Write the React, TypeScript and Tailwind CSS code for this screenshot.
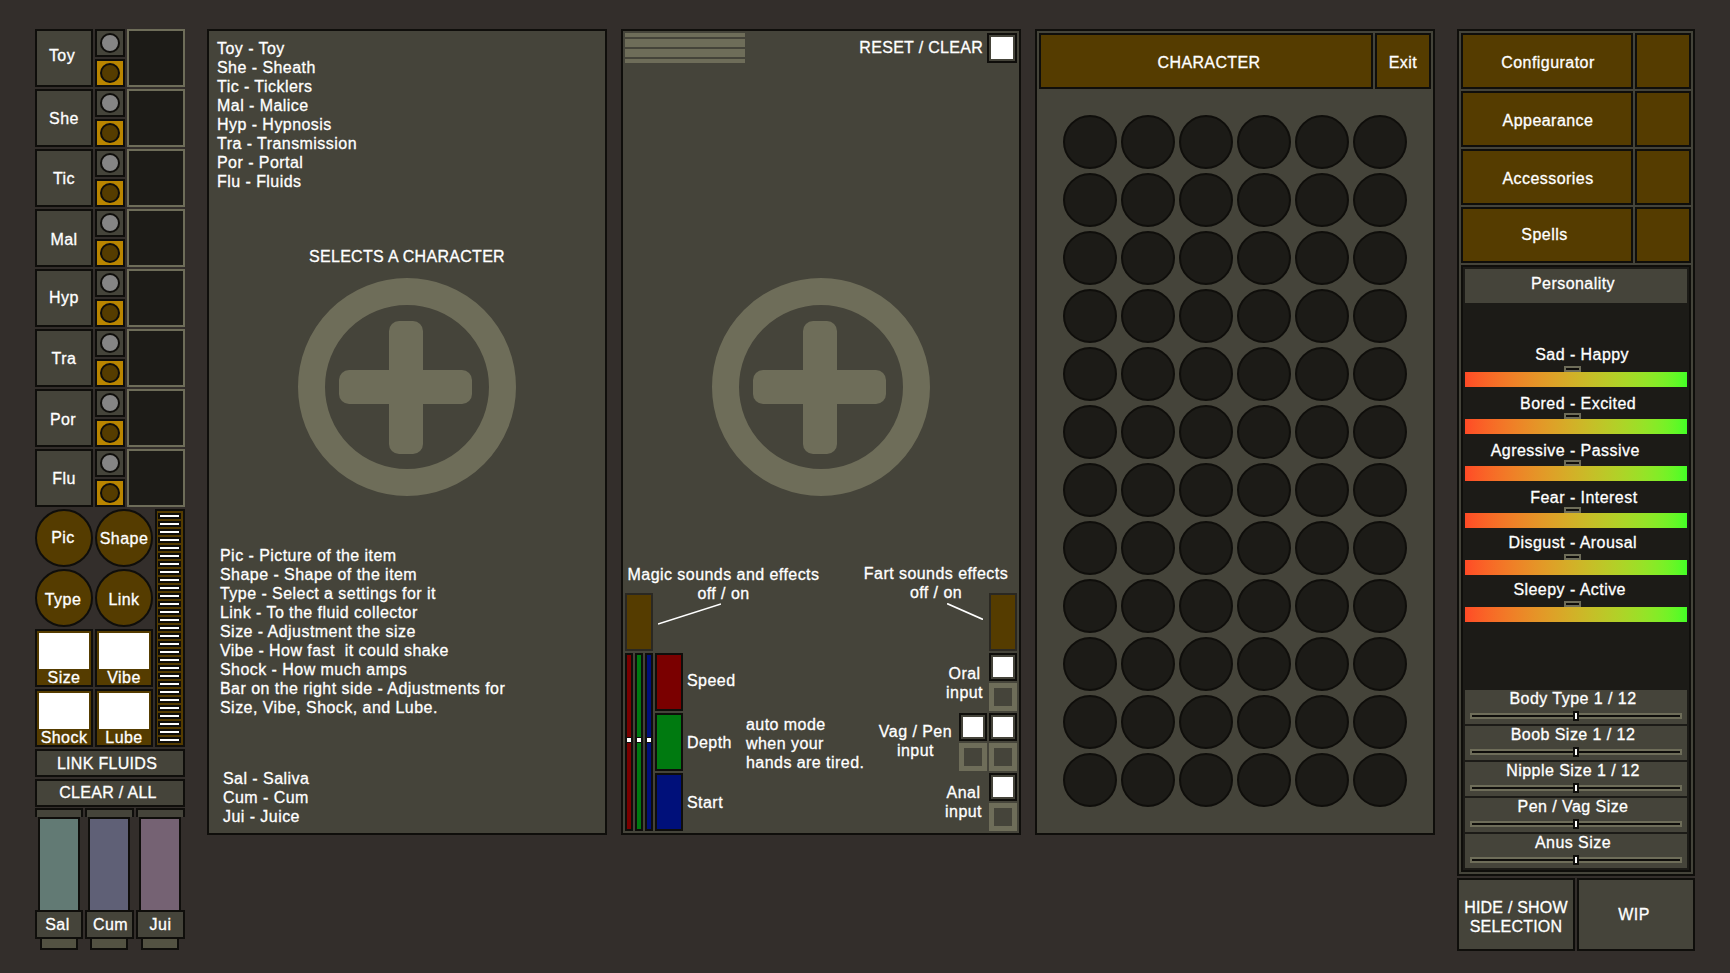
import React from "react";

function Plus() {
  return (
    <svg width="218" height="218" viewBox="0 0 218 218" className="block">
      <circle cx="109" cy="109" r="95.5" fill="none" stroke="#6e6d59" strokeWidth="27" />
      <rect x="41" y="92" width="133" height="34" rx="10" fill="#6e6d59" />
      <rect x="91" y="43" width="34" height="133" rx="10" fill="#6e6d59" />
    </svg>
  );
}

function Check({ size = "w-[28px] h-[28px]" }: { size?: string }) {
  return (
    <div className={`${size} border-2 border-[#0f0e0b] p-[2px] shrink-0`}>
      <div className="w-full h-full bg-white" />
    </div>
  );
}

function Off() {
  return <div className="w-[28px] h-[28px] border-[5px] border-[#6e6d59] shrink-0" />;
}

function LeftRow({ label, cls }: { label: string; cls: string }) {
  return (
    <div className="flex gap-[2px] h-[58px]">
      <div className={`w-[58px] border-2 border-[#0f0e0b] bg-[#45443a] flex items-center justify-center ${cls}`}>{label}</div>
      <div className="w-[30px] flex flex-col gap-[2px]">
        <div className="h-[28px] border-2 border-[#0f0e0b] bg-[#45443a] flex items-center justify-center">
          <div className="w-[20px] h-[20px] rounded-full border-2 border-[#0f0e0b] bg-[#858585]" />
        </div>
        <div className="h-[28px] border-2 border-[#0f0e0b] bg-[#b98500] flex items-center justify-center">
          <div className="w-[20px] h-[20px] rounded-full border-2 border-[#0f0e0b] bg-[#553c00]" />
        </div>
      </div>
      <div className="w-[58px] border-2 border-[#6e6d59] bg-[#1c1b17]" />
    </div>
  );
}

function Round({ label, cls = "" }: { label: string; cls?: string }) {
  return (
    <div className={`w-[58px] h-[58px] rounded-full border-2 border-[#0f0e0b] bg-[#553c00] flex items-center justify-center ${cls}`}>{label}</div>
  );
}

function Swatch({ label }: { label: string }) {
  return (
    <div className="w-[58px] h-[58px] border-2 border-[#0f0e0b] bg-[#553c00] p-[2px] flex flex-col items-center">
      <div className="w-[50px] h-[36px] bg-white shrink-0" />
      <div className="leading-[18px]">{label}</div>
    </div>
  );
}

function Fluid({ label, width, tube, cls }: { label: string; width: string; tube: string; cls: string }) {
  return (
    <div className={`${width} flex flex-col`}>
      <div className="h-[9px] border-2 border-b-0 border-[#0f0e0b] bg-[#45443a]" />
      <div className={`h-[93px] w-[42px] ml-[3px] border-x-2 border-t-2 border-[#0f0e0b] ${tube}`} />
      <div className={`h-[29px] border-2 border-[#0f0e0b] bg-[#45443a] flex items-center justify-center pt-[1px] ${cls}`}>{label}</div>
      <div className="h-[11px] w-[38px] ml-[5px] border-2 border-t-0 border-[#0f0e0b] bg-[#535242]" />
    </div>
  );
}

function LeftColumn() {
  const rows = [
    { t: "Toy", c: "pb-[4px] pr-[4px]" },
    { t: "She", c: "pt-[2px]" },
    { t: "Tic", c: "pt-[2px]" },
    { t: "Mal", c: "pt-[3px]" },
    { t: "Hyp", c: "" },
    { t: "Tra", c: "pt-[2px]" },
    { t: "Por", c: "pt-[3px] pr-[2px]" },
    { t: "Flu", c: "pt-[2px]" },
  ];
  const steps = Array.from({ length: 29 }, (_, i) => i);
  return (
    <div className="w-[150px] shrink-0 flex flex-col">
      <div className="flex flex-col gap-[2px]">
        {rows.map((r) => (
          <LeftRow key={r.t} label={r.t} cls={r.c} />
        ))}
      </div>
      <div className="flex gap-[2px] mt-[2px] h-[238px]">
        <div className="w-[118px] grid grid-cols-2 gap-[2px] content-start">
          <Round label="Pic" cls="pr-[2px]" />
          <Round label="Shape" cls="pt-[2px]" />
          <Round label="Type" cls="pt-[3px] pr-[2px]" />
          <Round label="Link" cls="pt-[3px]" />
          <Swatch label="Size" />
          <Swatch label="Vibe" />
          <Swatch label="Shock" />
          <Swatch label="Lube" />
        </div>
        <div className="w-[30px] border-2 border-[#0f0e0b] bg-[#553c00] pt-[2px] pl-[1px] pr-[2px] flex flex-col gap-[2px]">
          {steps.map((s) => (
            <div key={s} className="h-[6px] bg-[#0f0e0b] flex items-center justify-center shrink-0">
              <div className="w-[19px] h-[2px] bg-white" />
            </div>
          ))}
        </div>
      </div>
      <div className="mt-[2px] h-[28px] border-2 border-[#0f0e0b] bg-[#45443a] flex items-center justify-center pr-[6px] pt-[2px] tracking-[0.3px]">LINK FLUIDS</div>
      <div className="mt-[2px] h-[28px] border-2 border-[#0f0e0b] bg-[#45443a] flex items-center justify-center pr-[4px] pb-[1px] tracking-[0.3px]">CLEAR / ALL</div>
      <div className="mt-px flex gap-[2px]">
        <Fluid label="Sal" width="w-[48px]" tube="bg-[#627a74]" cls="pr-[3px]" />
        <Fluid label="Cum" width="w-[49px]" tube="bg-[#5f6076]" cls="pl-[2px]" />
        <Fluid label="Jui" width="w-[49px]" tube="bg-[#756273]" cls="" />
      </div>
    </div>
  );
}

function Panel1() {
  return (
    <div className="w-[400px] h-[806px] shrink-0 border-2 border-[#0f0e0b] bg-[#45443a] flex flex-col leading-[19px]">
      <div className="ml-[8px] mt-[8px]">
        {["Toy - Toy", "She - Sheath", "Tic - Ticklers", "Mal - Malice", "Hyp - Hypnosis", "Tra - Transmission", "Por - Portal", "Flu - Fluids"].map((t) => (
          <div key={t}>{t}</div>
        ))}
      </div>
      <div className="mt-[56px] text-center tracking-[0.3px]">SELECTS A CHARACTER</div>
      <div className="mt-[12px] flex justify-center"><Plus /></div>
      <div className="ml-[11px] mt-[50px]">
        {["Pic - Picture of the item", "Shape - Shape of the item", "Type - Select a settings for it", "Link - To the fluid collector", "Size - Adjustment the size", "Vibe - How fast  it could shake", "Shock - How much amps", "Bar on the right side - Adjustments for", "Size, Vibe, Shock, and Lube."].map((t) => (
          <div key={t} className="whitespace-pre">{t}</div>
        ))}
      </div>
      <div className="ml-[14px] mt-[52px]">
        <div>Sal - Saliva</div>
        <div>Cum - Cum</div>
        <div>Jui - Juice</div>
      </div>
    </div>
  );
}

function VBar({ fill }: { fill: string }) {
  return (
    <div className={`relative w-[8px] h-[178px] shrink-0 border-2 border-[#0f0e0b] ${fill}`}>
      <div className="absolute left-0 top-[82px] w-[4px] h-[6px] border-y border-[#0f0e0b] bg-white" />
    </div>
  );
}

function Panel2() {
  return (
    <div className="w-[400px] h-[806px] shrink-0 border-2 border-[#0f0e0b] bg-[#45443a] flex flex-col leading-[19px]">
      <div className="flex justify-between px-[2px] pt-[2px]">
        <div className="w-[120px] flex flex-col gap-[2px]">
          <div className="h-[4px] bg-[#6e6d59]" />
          <div className="h-[8px] bg-[#6e6d59]" />
          <div className="h-[8px] bg-[#6e6d59]" />
          <div className="h-[4px] bg-[#6e6d59]" />
        </div>
        <div className="flex items-start gap-[4px]">
          <span className="mt-[5px] tracking-[0.3px]">RESET / CLEAR</span>
          <Check size="w-[30px] h-[30px]" />
        </div>
      </div>
      <div className="mt-[215px] flex justify-center"><Plus /></div>
      <div className="flex justify-between px-[2px]">
        <div className="mt-[69px] flex flex-col w-[234px] shrink-0">
          <div className="w-[197px] text-center -mb-[10px]">
            <div>Magic sounds and effects</div>
            <div>off / on</div>
          </div>
          <div className="flex items-start">
            <div className="w-[28px] h-[58px] border-2 border-[#2a2822] bg-[#553c00]" />
            <svg width="63" height="22" viewBox="0 0 63 22" className="ml-[5px] mt-[10px]">
              <line x1="0" y1="21" x2="63" y2="1" stroke="#fff" strokeWidth="1.6" />
            </svg>
          </div>
          <div className="flex gap-[2px] mt-[2px]">
            <VBar fill="bg-[#7a0000]" />
            <VBar fill="bg-[#007a10]" />
            <VBar fill="bg-[#00107a]" />
            <div className="flex flex-col gap-[2px]">
              <div className="flex items-center h-[58px]">
                <div className="w-[28px] h-[58px] border-2 border-[#0f0e0b] bg-[#7a0000] shrink-0" />
                <span className="ml-[4px] pb-[4px]">Speed</span>
              </div>
              <div className="flex items-center h-[58px]">
                <div className="w-[28px] h-[58px] border-2 border-[#0f0e0b] bg-[#007a10] shrink-0" />
                <span className="ml-[4px] w-[59px] shrink-0">Depth</span>
                <div className="whitespace-nowrap pt-[2px]">
                  <div>auto mode</div>
                  <div>when your</div>
                  <div>hands are tired.</div>
                </div>
              </div>
              <div className="flex items-center h-[58px]">
                <div className="w-[28px] h-[58px] border-2 border-[#0f0e0b] bg-[#00107a] shrink-0" />
                <span className="ml-[4px]">Start</span>
              </div>
            </div>
          </div>
        </div>
        <div className="mt-[68px] flex flex-col w-[158px] shrink-0">
          <div className="w-[148px] ml-[3px] text-center -mb-[9px]">
            <div>Fart sounds effects</div>
            <div>off / on</div>
          </div>
          <div className="flex justify-end items-start">
            <svg width="36" height="17" viewBox="0 0 36 17" className="mt-[10px] mr-[6px]">
              <line x1="0" y1="0.5" x2="36" y2="16.5" stroke="#fff" strokeWidth="1.6" />
            </svg>
            <div className="w-[28px] h-[58px] border-2 border-[#2a2822] bg-[#553c00]" />
          </div>
          <div className="flex flex-col gap-[2px] mt-[2px]">
            <div className="flex justify-end items-center gap-[6px] h-[58px]">
              <div className="text-center pt-[1px]"><div>Oral</div><div>input</div></div>
              <div className="flex flex-col gap-[2px]"><Check /><Off /></div>
            </div>
            <div className="flex justify-end items-center gap-[7px] h-[58px]">
              <div className="text-center pb-[3px]"><div>Vag / Pen</div><div>input</div></div>
              <div className="grid grid-cols-2 gap-[2px]"><Check /><Check /><Off /><Off /></div>
            </div>
            <div className="flex justify-end items-center gap-[7px] h-[58px]">
              <div className="text-center"><div>Anal</div><div>input</div></div>
              <div className="flex flex-col gap-[2px]"><Check /><Off /></div>
            </div>
          </div>
        </div>
      </div>
    </div>
  );
}

function Panel3() {
  const dots = Array.from({ length: 72 }, (_, i) => i);
  return (
    <div className="w-[400px] h-[806px] shrink-0 border-2 border-[#0f0e0b] bg-[#45443a] p-[2px]">
      <div className="flex gap-[2px] h-[56px]">
        <div className="w-[334px] border-2 border-[#0f0e0b] bg-[#553c00] flex items-center justify-center pt-[4px] pl-[6px] tracking-[0.36px]">CHARACTER</div>
        <div className="w-[56px] border-2 border-[#0f0e0b] bg-[#553c00] flex items-center justify-center pt-[3px]">Exit</div>
      </div>
      <div className="mt-[26px] ml-[24px] grid grid-cols-[repeat(6,54px)] auto-rows-[54px] gap-[4px]">
        {dots.map((d) => (
          <div key={d} className="rounded-full border-2 border-[#0f0e0b] bg-[#1c1b17]" />
        ))}
      </div>
    </div>
  );
}

const moods = [
  { l: "Sad", r: "Happy", top: "mt-[42px]", gap: "mt-[2px]" },
  { l: "Bored", r: "Excited", top: "mt-[7px]", gap: "mt-0" },
  { l: "Agressive", r: "Passive", top: "mt-[7px]", gap: "mt-0" },
  { l: "Fear", r: "Interest", top: "mt-[7px]", gap: "mt-0" },
  { l: "Disgust", r: "Arousal", top: "mt-[5px]", gap: "mt-[2px]" },
  { l: "Sleepy", r: "Active", top: "mt-[5px]", gap: "mt-[2px]" },
];

function SizeSlider({ label }: { label: string }) {
  return (
    <div className="h-[34px] bg-[#45443a] flex flex-col">
      <div className="leading-[16px] pt-[1px] text-center pr-[6px]">{label}</div>
      <div className="relative mt-[6px] mx-[5px] h-[6px] border-2 border-[#6e6d59] bg-[#0f0e0b]">
        <div className="absolute left-[101px] top-[-4px] w-[6px] h-[10px] border-2 border-[#0f0e0b] bg-white" />
      </div>
    </div>
  );
}

function RightColumn() {
  const rows = [
    { t: "Configurator", c: "pt-[4px] pl-[2px]" },
    { t: "Appearance", c: "pt-[4px] pl-[2px]" },
    { t: "Accessories", c: "pt-[4px] pl-[2px]" },
    { t: "Spells", c: "pr-[5px]" },
  ];
  return (
    <div className="w-[238px] shrink-0 flex flex-col">
      <div className="h-[847px] border-2 border-[#0f0e0b] bg-[#45443a] p-[2px] flex flex-col">
        <div className="flex flex-col gap-[2px]">
          {rows.map((r) => (
            <div key={r.t} className="flex gap-[2px] h-[56px]">
              <div className={`w-[172px] border-2 border-[#0f0e0b] bg-[#553c00] flex items-center justify-center ${r.c}`}>{r.t}</div>
              <div className="w-[56px] border-2 border-[#0f0e0b] bg-[#553c00]" />
            </div>
          ))}
        </div>
        <div className="mt-[2px] h-[607px] border-2 border-[#0f0e0b] bg-[#1c1b17] px-[2px] pt-[2px] flex flex-col">
          <div className="h-[34px] bg-[#45443a] flex items-center justify-center pb-[4px] pr-[6px]">Personality</div>
          {moods.map((m) => (
            <div key={m.l} className={m.top}>
              <div className="flex leading-[19px] whitespace-pre">
                <span className="w-[100px] text-right">{m.l}</span>
                <span>{` - ${m.r}`}</span>
              </div>
              <div className={`w-[17px] h-[6px] ml-[99px] border-2 border-[#6e6d59] bg-[#0f0e0b] ${m.gap}`} />
              <div className="h-[15px] bg-linear-to-r from-[#ff4a26] to-[#42ff26]" />
            </div>
          ))}
          <div className="mt-[68px] flex flex-col gap-[2px]">
            {["Body Type 1 / 12", "Boob Size 1 / 12", "Nipple Size 1 / 12", "Pen / Vag Size", "Anus Size"].map((s) => (
              <SizeSlider key={s} label={s} />
            ))}
          </div>
        </div>
      </div>
      <div className="mt-[2px] flex gap-[2px] h-[73px]">
        <div className="w-[118px] border-2 border-[#0f0e0b] bg-[#45443a] flex items-center justify-center text-center leading-[19px] pt-[4px] tracking-[0.2px]">
          <div>HIDE / SHOW<br />SELECTION</div>
        </div>
        <div className="w-[118px] border-2 border-[#0f0e0b] bg-[#45443a] flex items-center justify-center pr-[4px]">WIP</div>
      </div>
    </div>
  );
}

export default function App() {
  return (
    <div className="w-[1730px] h-[973px] overflow-hidden bg-[#332e2b] pt-[29px] pl-[35px] flex font-['Liberation_Sans',Arial,sans-serif] text-[16px] text-white tracking-[0.45px] [-webkit-text-stroke:0.3px_white]">
      <LeftColumn />
      <div className="ml-[22px] flex gap-[14px]">
        <Panel1 />
        <Panel2 />
        <Panel3 />
      </div>
      <div className="ml-[22px]">
        <RightColumn />
      </div>
    </div>
  );
}
